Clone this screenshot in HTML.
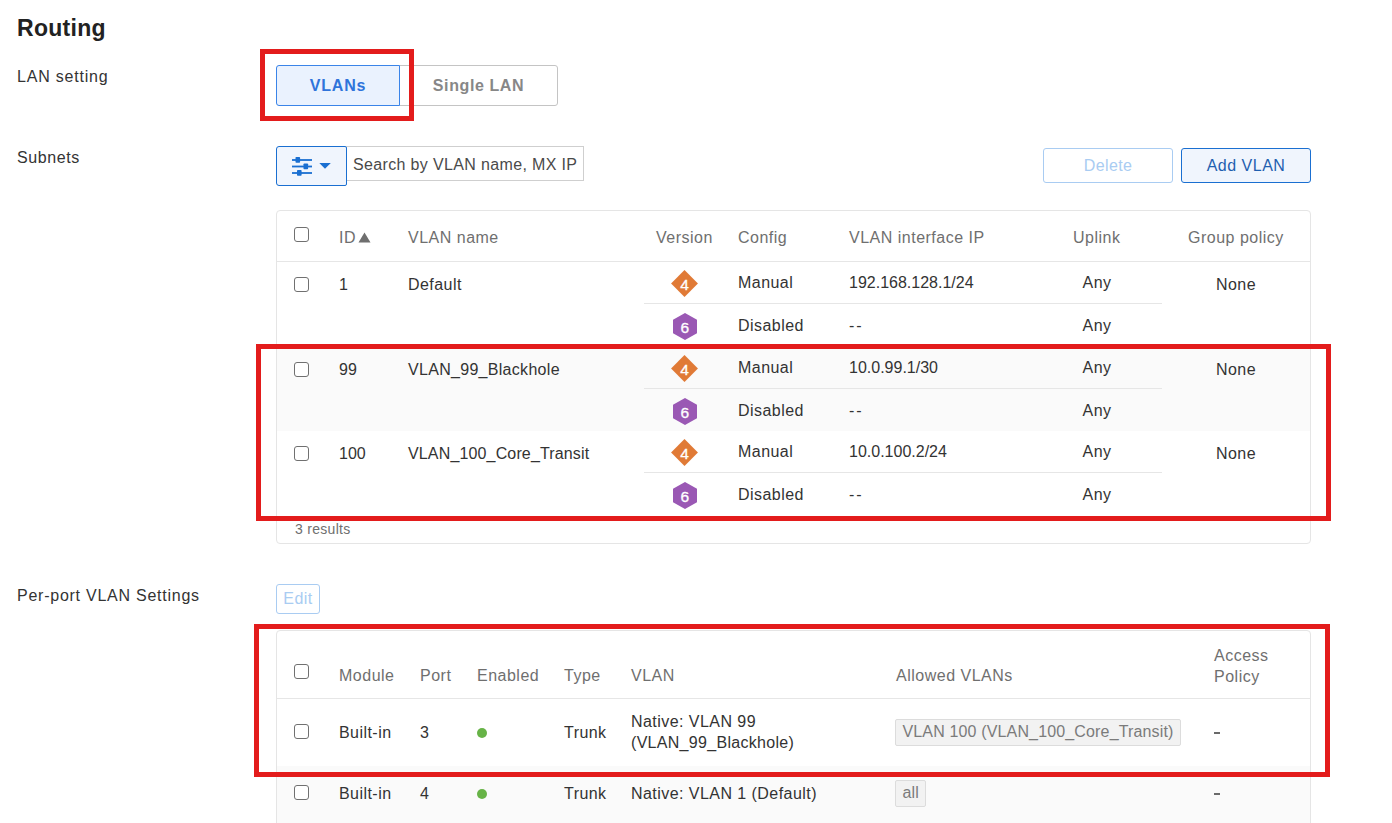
<!DOCTYPE html>
<html><head><meta charset="utf-8">
<style>
*{box-sizing:border-box;margin:0;padding:0}
html,body{width:1392px;height:823px;overflow:hidden;background:#fff}
body{position:relative;font-family:"Liberation Sans",sans-serif;font-size:16px;color:#333}
.a{position:absolute;white-space:nowrap;line-height:20px;letter-spacing:0.45px}
.n{letter-spacing:0}
.h{color:#6f6f6f;letter-spacing:0.5px}
.red{position:absolute;border:5px solid #e31c1c;z-index:10}
.btn{position:absolute;border-radius:3px}
.cb{position:absolute;width:15px;height:15px;border:1.5px solid #707070;border-radius:3px;background:#fff}
.tbl{position:absolute;border:1px solid #e5e5e5;border-radius:4px;background:#fff}
.line{position:absolute;height:1px;background:#e6e6e6}
.v4{position:absolute;width:19px;height:19px;background:#e07a36;transform:rotate(45deg)}
.vt{position:absolute;width:28px;text-align:center;color:#fff;font-size:15.5px;line-height:20px;-webkit-text-stroke:0.3px #fff}
.hex{position:absolute;width:24px;height:27px}
.dot{position:absolute;width:10px;height:10px;border-radius:50%;background:#67b347}
.tag{position:absolute;height:26.5px;background:#f2f2f2;border:1px solid #dcdcdc;border-radius:2px;color:#7b7b7b;line-height:24px;padding:0 6.5px;white-space:nowrap;letter-spacing:0.15px}
.dash{position:absolute;width:5.5px;height:2px;background:#6a6a6a}
</style></head><body>
<div class="a " style="left:17px;top:14px;font-size:23px;line-height:28px;font-weight:bold;color:#222;letter-spacing:0.3px">Routing</div>
<div class="a " style="left:17px;top:67px;letter-spacing:0.8px">LAN setting</div>
<div class="btn" style="left:276px;top:65px;width:124px;height:41px;border:1px solid #3a84e8;background:#eaf2fe;border-radius:3px 0 0 3px;z-index:2"></div>
<div class="a " style="left:276px;top:76px;width:124px;text-align:center;font-weight:bold;color:#2f74db;z-index:3;letter-spacing:0.8px">VLANs</div>
<div class="btn" style="left:399px;top:65px;width:159px;height:41px;border:1px solid #c4c4c4;background:#fff;border-radius:0 3px 3px 0"></div>
<div class="a " style="left:399px;top:76px;width:159px;text-align:center;font-weight:bold;color:#878787;letter-spacing:0.6px">Single LAN</div>
<div class="red" style="left:260px;top:49px;width:154px;height:72px"></div>
<div class="a " style="left:17px;top:148px;letter-spacing:0.6px">Subnets</div>
<div class="btn" style="left:276px;top:146px;width:71px;height:40px;border:1.5px solid #1a6fd1;background:#f0f5fd;border-radius:3px 2px 2px 3px;z-index:2"></div>
<svg style="position:absolute;left:290px;top:155px;z-index:3" width="45" height="22" viewBox="0 0 45 22"><g fill="#1a6fd1">
<rect x="2" y="4.1" width="20" height="1.8"/><rect x="5.5" y="2" width="4.6" height="5.8" rx="0.8"/>
<rect x="2" y="10.6" width="20" height="1.8"/><rect x="13.5" y="8.5" width="4.6" height="5.8" rx="0.8"/>
<rect x="2" y="17.1" width="20" height="1.8"/><rect x="7" y="15" width="4.6" height="5.8" rx="0.8"/>
<path d="M29.3 8 L40.8 8 L35 13.8 Z"/></g></svg>
<div class="btn" style="left:346px;top:146px;width:238px;height:35px;border:1px solid #cfcfcf;background:#fff;border-radius:0"></div>
<div class="a " style="left:353px;top:155px;color:#4a4a4a;letter-spacing:0.35px">Search by VLAN name, MX IP</div>
<div class="btn" style="left:1043px;top:148px;width:130px;height:35px;border:1px solid #a9ccf2;background:#fff"></div>
<div class="a " style="left:1043px;top:156px;width:130px;text-align:center;color:#a9ccf2;letter-spacing:0.4px">Delete</div>
<div class="btn" style="left:1181px;top:148px;width:130px;height:35px;border:1.3px solid #1a6fd1;background:#f0f5fd"></div>
<div class="a " style="left:1181px;top:156px;width:130px;text-align:center;color:#1f5fb0;letter-spacing:0.5px">Add VLAN</div>
<div class="tbl" style="left:276px;top:210px;width:1035px;height:334px"></div>
<div class="line" style="left:277px;top:261px;width:1033px"></div>
<div style="position:absolute;left:277px;top:346px;width:1033px;height:85px;background:#fafafa"></div>
<div style="position:absolute;left:277px;top:431px;width:1033px;height:84px;background:#fff"></div>
<div class="cb" style="left:294px;top:227px"></div>
<div class="a h" style="left:339px;top:228px;">ID</div>
<svg style="position:absolute;left:358px;top:232px" width="13" height="11"><path d="M6.5 0.5 L12.5 10.5 L0.5 10.5 Z" fill="#6f6f6f"/></svg>
<div class="a h" style="left:408px;top:228px;">VLAN name</div>
<div class="a h" style="left:656px;top:228px;">Version</div>
<div class="a h" style="left:738px;top:228px;">Config</div>
<div class="a h" style="left:849px;top:228px;">VLAN interface IP</div>
<div class="a h" style="left:1073px;top:228px;">Uplink</div>
<div class="a h" style="left:1188px;top:228px;">Group policy</div>
<div class="cb" style="left:294px;top:277px"></div>
<div class="a n" style="left:339px;top:275px;">1</div>
<div class="a " style="left:408px;top:275px;letter-spacing:0.45px">Default</div>
<div class="line" style="left:644px;top:303px;width:518px"></div>
<div class="v4" style="left:675.1px;top:274px"></div>
<div class="vt" style="left:670.6px;top:274.5px">4</div>
<svg class="hex" style="left:673px;top:313px" viewBox="0 0 24 27"><polygon points="12,0 24,6.75 24,20.25 12,27 0,20.25 0,6.75" fill="#9a58b4"/></svg>
<div class="vt" style="left:670.8px;top:318px">6</div>
<div class="a " style="left:738px;top:273px;">Manual</div>
<div class="a " style="left:738px;top:316px;">Disabled</div>
<div class="a n" style="left:849px;top:273px;">192.168.128.1/24</div>
<div class="a " style="left:849px;top:316px;letter-spacing:2px">--</div>
<div class="a " style="left:1057px;top:273px;width:80px;text-align:center">Any</div>
<div class="a " style="left:1057px;top:316px;width:80px;text-align:center">Any</div>
<div class="a " style="left:1196px;top:275px;width:80px;text-align:center">None</div>
<div class="cb" style="left:294px;top:362px"></div>
<div class="a n" style="left:339px;top:360px;">99</div>
<div class="a " style="left:408px;top:360px;letter-spacing:0.3px">VLAN_99_Blackhole</div>
<div class="line" style="left:644px;top:388px;width:518px"></div>
<div class="v4" style="left:675.1px;top:359px"></div>
<div class="vt" style="left:670.6px;top:359.5px">4</div>
<svg class="hex" style="left:673px;top:398px" viewBox="0 0 24 27"><polygon points="12,0 24,6.75 24,20.25 12,27 0,20.25 0,6.75" fill="#9a58b4"/></svg>
<div class="vt" style="left:670.8px;top:403px">6</div>
<div class="a " style="left:738px;top:358px;">Manual</div>
<div class="a " style="left:738px;top:401px;">Disabled</div>
<div class="a n" style="left:849px;top:358px;">10.0.99.1/30</div>
<div class="a " style="left:849px;top:401px;letter-spacing:2px">--</div>
<div class="a " style="left:1057px;top:358px;width:80px;text-align:center">Any</div>
<div class="a " style="left:1057px;top:401px;width:80px;text-align:center">Any</div>
<div class="a " style="left:1196px;top:360px;width:80px;text-align:center">None</div>
<div class="cb" style="left:294px;top:446px"></div>
<div class="a n" style="left:339px;top:444px;">100</div>
<div class="a " style="left:408px;top:444px;letter-spacing:0.15px">VLAN_100_Core_Transit</div>
<div class="line" style="left:644px;top:472px;width:518px"></div>
<div class="v4" style="left:675.1px;top:443px"></div>
<div class="vt" style="left:670.6px;top:443.5px">4</div>
<svg class="hex" style="left:673px;top:482px" viewBox="0 0 24 27"><polygon points="12,0 24,6.75 24,20.25 12,27 0,20.25 0,6.75" fill="#9a58b4"/></svg>
<div class="vt" style="left:670.8px;top:487px">6</div>
<div class="a " style="left:738px;top:442px;">Manual</div>
<div class="a " style="left:738px;top:485px;">Disabled</div>
<div class="a n" style="left:849px;top:442px;">10.0.100.2/24</div>
<div class="a " style="left:849px;top:485px;letter-spacing:2px">--</div>
<div class="a " style="left:1057px;top:442px;width:80px;text-align:center">Any</div>
<div class="a " style="left:1057px;top:485px;width:80px;text-align:center">Any</div>
<div class="a " style="left:1196px;top:444px;width:80px;text-align:center">None</div>
<div class="a h" style="left:295px;top:520px;font-size:14px;line-height:18px;letter-spacing:0.3px">3 results</div>
<div class="a " style="left:17px;top:586px;letter-spacing:0.75px">Per-port VLAN Settings</div>
<div class="btn" style="left:276px;top:584px;width:44px;height:30px;border:1px solid #a9ccf2;background:#fff"></div>
<div class="a " style="left:276px;top:589px;width:44px;text-align:center;color:#a9ccf2">Edit</div>
<div class="tbl" style="left:276px;top:630px;width:1035px;height:220px"></div>
<div class="line" style="left:277px;top:698px;width:1033px"></div>
<div style="position:absolute;left:277px;top:766px;width:1033px;height:60px;background:#fafafa"></div>
<div class="cb" style="left:294px;top:664px"></div>
<div class="a h" style="left:339px;top:666px;">Module</div>
<div class="a h" style="left:420px;top:666px;">Port</div>
<div class="a h" style="left:477px;top:666px;">Enabled</div>
<div class="a h" style="left:564px;top:666px;">Type</div>
<div class="a h" style="left:631px;top:666px;">VLAN</div>
<div class="a h" style="left:896px;top:666px;">Allowed VLANs</div>
<div class="a h" style="left:1214px;top:645px;line-height:21px">Access<br>Policy</div>
<div class="cb" style="left:294px;top:724px"></div>
<div class="a " style="left:339px;top:723px;">Built-in</div>
<div class="a n" style="left:420px;top:723px;">3</div>
<div class="dot" style="left:477px;top:728px"></div>
<div class="a " style="left:564px;top:723px;">Trunk</div>
<div class="a " style="left:631px;top:711px;line-height:21px">Native: VLAN 99<br><span style='letter-spacing:0.3px'>(VLAN_99_Blackhole)</span></div>
<div class="tag" style="left:895px;top:719px">VLAN 100 (VLAN_100_Core_Transit)</div>
<div class="dash" style="left:1214px;top:732px"></div>
<div class="cb" style="left:294px;top:785px"></div>
<div class="a " style="left:339px;top:784px;">Built-in</div>
<div class="a n" style="left:420px;top:784px;">4</div>
<div class="dot" style="left:477px;top:789px"></div>
<div class="a " style="left:564px;top:784px;">Trunk</div>
<div class="a " style="left:631px;top:784px;">Native: VLAN 1 (Default)</div>
<div class="tag" style="left:895px;top:780px">all</div>
<div class="dash" style="left:1214px;top:793px"></div>
<div class="red" style="left:256px;top:344px;width:1075px;height:177px"></div>
<div class="red" style="left:254px;top:624px;width:1076px;height:153px"></div>
</body></html>
